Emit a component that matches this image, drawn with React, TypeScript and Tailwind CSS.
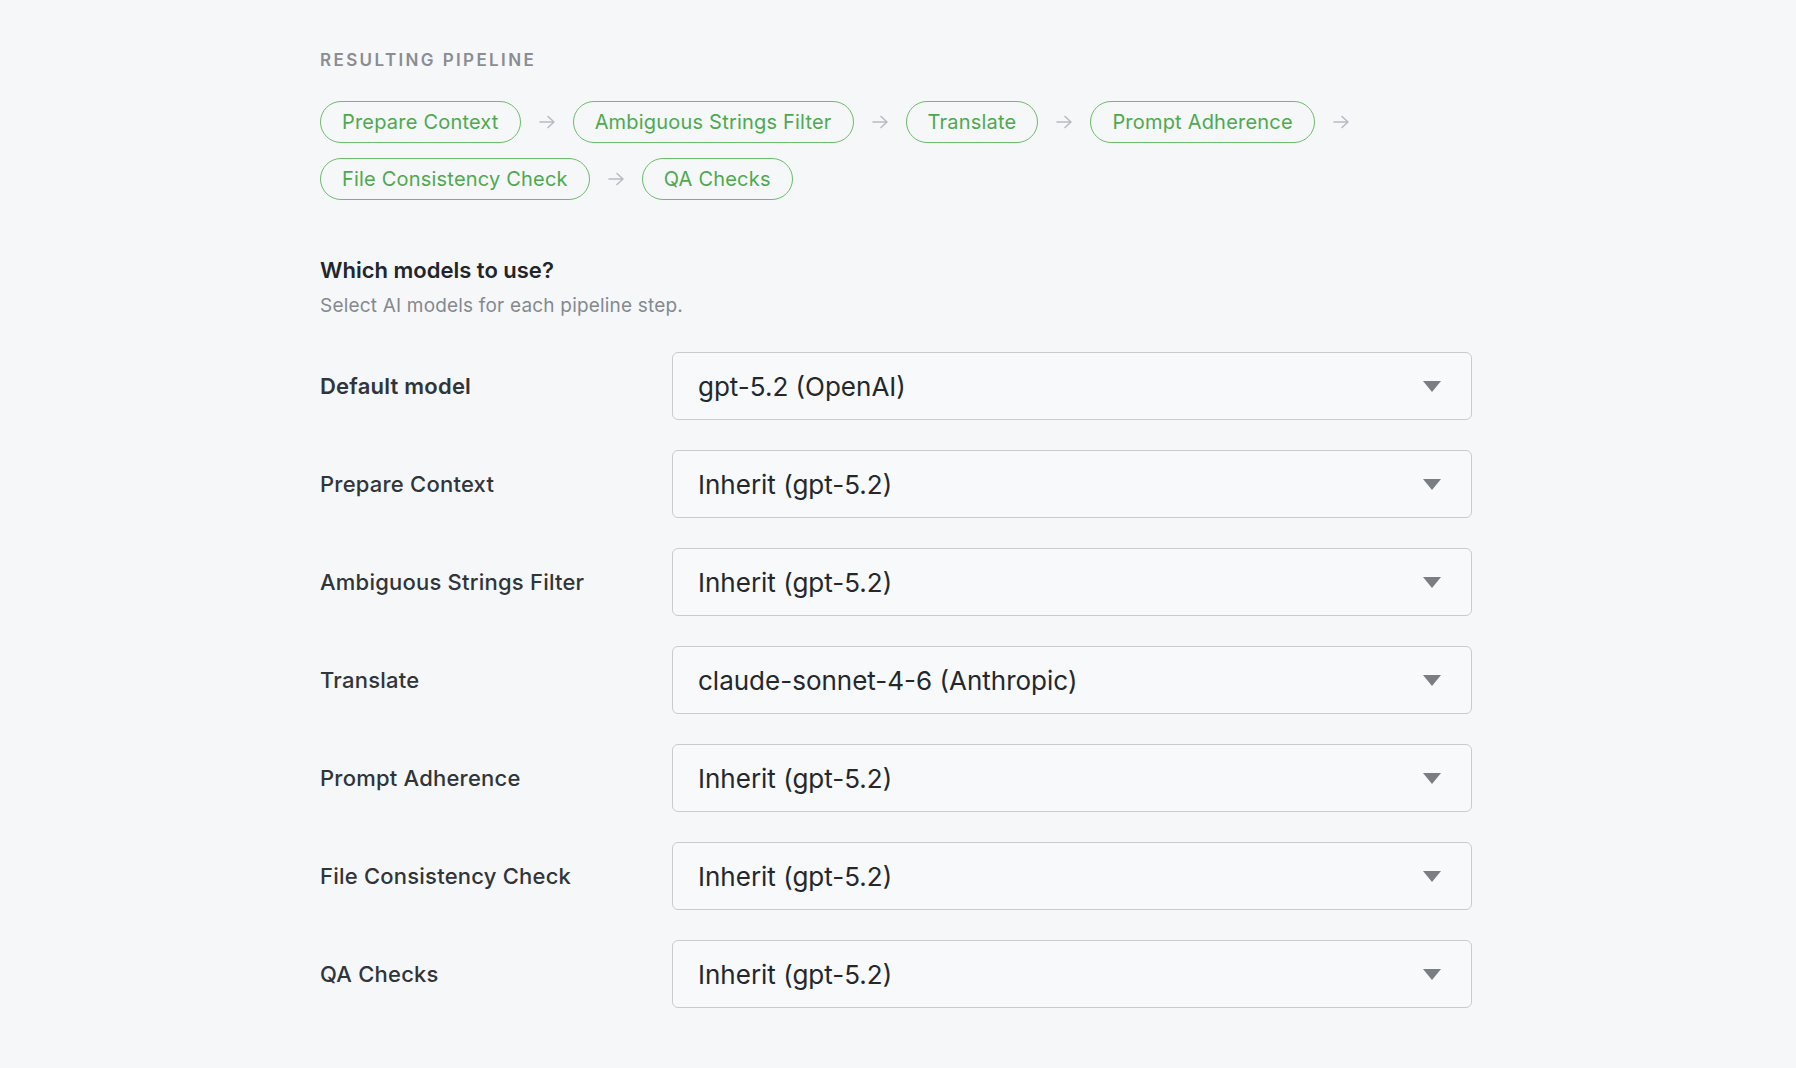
import React from 'react';

const steps = ['Prepare Context', 'Ambiguous Strings Filter', 'Translate', 'Prompt Adherence', 'File Consistency Check', 'QA Checks'];

const rows: { label: string; value: string; bold?: boolean }[] = [
  { label: 'Default model', value: 'gpt-5.2 (OpenAI)', bold: true },
  { label: 'Prepare Context', value: 'Inherit (gpt-5.2)' },
  { label: 'Ambiguous Strings Filter', value: 'Inherit (gpt-5.2)' },
  { label: 'Translate', value: 'claude-sonnet-4-6 (Anthropic)' },
  { label: 'Prompt Adherence', value: 'Inherit (gpt-5.2)' },
  { label: 'File Consistency Check', value: 'Inherit (gpt-5.2)' },
  { label: 'QA Checks', value: 'Inherit (gpt-5.2)' },
];

const Arrow = () => (
  <svg width="18" height="14" viewBox="0 0 18 14" fill="none" stroke="#b8bcc2" strokeWidth="1.6" strokeLinecap="round" strokeLinejoin="round">
    <path d="M2 7h14M10 1.5L16 7l-6 5.5" />
  </svg>
);

export default function App() {
  return (
    <div className="min-h-screen bg-[#f5f7f9] font-[Inter,sans-serif]">
      <div className="w-[1152px] ml-[320px] pt-[49px] pb-10">
        <div className="text-[17px] font-semibold tracking-[0.14em] text-[#8a8d91] leading-[22px]">RESULTING PIPELINE</div>
        <div className="mt-[30px] flex flex-wrap items-center gap-y-[15px] pr-[40px]">
          {steps.map((s, i) => (
            <div key={s} className="flex items-center">
              <span className="h-[42px] px-[21px] flex items-center rounded-full border border-[#6cbd6c] text-[#4ea94e] text-[20px] tracking-[0.01em]">
                {s}
              </span>
              {i < steps.length - 1 && (
                <span className="mx-[17px] flex items-center"><Arrow /></span>
              )}
            </div>
          ))}
        </div>
        <div className="mt-[56px] text-[22px] font-semibold text-[#22262a] leading-[28px]">Which models to use?</div>
        <div className="mt-[9px] text-[19px] text-[#85898e] leading-[26px] tracking-[0.01em]">Select AI models for each pipeline step.</div>
        <div className="mt-[33px] flex flex-col gap-[30px]">
          {rows.map((r) => (
            <div key={r.label} className="flex items-center">
              <div className={`w-[352px] text-[22px] text-[#30353a] tracking-[0.01em] ${r.bold ? 'font-semibold' : 'font-medium'}`}>{r.label}</div>
              <div className="w-[800px] h-[68px] flex items-center justify-between rounded-[6px] border border-[#c9cbce] bg-[#f7f9fa] pl-[25px] pr-[30px]">
                <span className="text-[26px] text-[#24282c]">{r.value}</span>
                <svg width="18" height="11" viewBox="0 0 18 11"><path d="M0 0h18L9 11z" fill="#7a7d81" /></svg>
              </div>
            </div>
          ))}
        </div>
      </div>
    </div>
  );
}
